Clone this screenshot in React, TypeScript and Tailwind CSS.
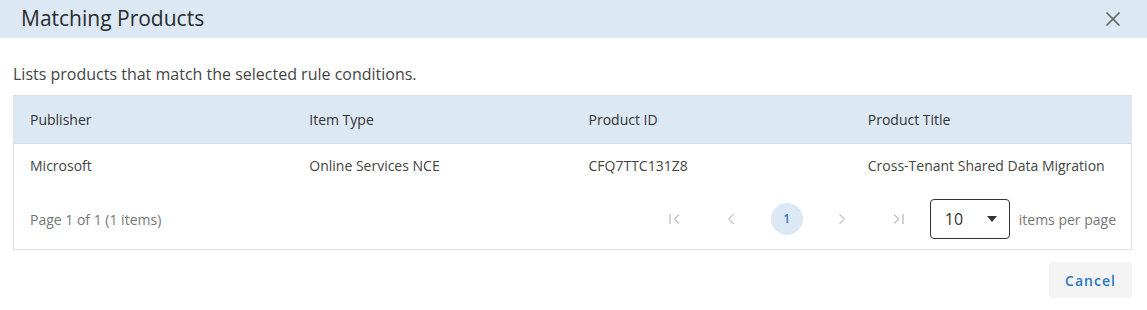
import { ChevronLeft, ChevronRight, X } from "lucide-react";

const columns = ["Publisher", "Item Type", "Product ID", "Product Title"];
const rows = [["Microsoft", "Online Services NCE", "CFQ7TTC131Z8", "Cross-Tenant Shared Data Migration"]];

function FirstIcon() {
  return (
    <svg width="16" height="16" viewBox="0 0 16 16" fill="none" stroke="currentColor" strokeWidth="1.6">
      <path d="M3 3v10" />
      <path d="M12 3.5 7.5 8l4.5 4.5" />
    </svg>
  );
}

function LastIcon() {
  return (
    <svg width="16" height="16" viewBox="0 0 16 16" fill="none" stroke="currentColor" strokeWidth="1.6">
      <path d="M13 3v10" />
      <path d="M4 3.5 8.5 8 4 12.5" />
    </svg>
  );
}

export default function App() {
  return (
    <div className="w-[1147px] h-[310px] bg-white text-[#333] font-['Open_Sans',sans-serif]">
      {/* Title bar */}
      <div className="h-[38px] bg-[#dce8f4] flex items-center justify-between pl-[21px] pr-[22px]">
        <h1 className="text-[21px] leading-[28px] text-[#2b2b2b] -mt-[2px]">Matching Products</h1>
        <X className="w-[24px] h-[24px] text-[#666]" strokeWidth={1.7} />
      </div>

      <div className="px-[13px] pr-[15px]">
        <p className="text-[16px] text-[#444] mt-[25px] mb-[9px] leading-[23px]">
          Lists products that match the selected rule conditions.
        </p>

        <div className="border border-[#e2e2e2]">
          <div className="grid grid-cols-4 h-[48px] bg-[#dce8f4] border-b border-[#d6dde5] items-center text-[14px] text-[#333]">
            {columns.map((c) => (
              <div key={c} className="pl-[16px]">{c}</div>
            ))}
          </div>
          {rows.map((r, i) => (
            <div key={i} className="grid grid-cols-4 h-[45px] items-center text-[14px] text-[#444]">
              {r.map((v, j) => (
                <div key={j} className="pl-[16px] -mt-[2px]">{v}</div>
              ))}
            </div>
          ))}

          {/* Pager */}
          <div className="h-[60px] flex items-center pl-[16px] pr-[15px]">
            <span className="text-[14px] text-[#777]">Page 1 of 1 (1 items)</span>
            <div className="ml-auto flex items-center text-[#c8c8c8]">
              <button className="w-[32px] h-[32px] flex items-center justify-center">
                <FirstIcon />
              </button>
              <button className="w-[32px] h-[32px] flex items-center justify-center ml-[24px]">
                <ChevronLeft className="w-[18px] h-[18px]" strokeWidth={1.6} />
              </button>
              <button className="w-[32px] h-[32px] rounded-full bg-[#dce8f4] text-[#2a78c2] text-[12px] font-semibold flex items-center justify-center ml-[24px]">
                1
              </button>
              <button className="w-[32px] h-[32px] flex items-center justify-center ml-[23px]">
                <ChevronRight className="w-[18px] h-[18px]" strokeWidth={1.6} />
              </button>
              <button className="w-[32px] h-[32px] flex items-center justify-center ml-[24px]">
                <LastIcon />
              </button>
              <div className="ml-[16px] w-[80px] h-[40px] border border-[#333] rounded-[4px] flex items-center justify-between pl-[14px] pr-[12px] text-[#333]">
                <span className="text-[16px]">10</span>
                <svg width="10" height="6" viewBox="0 0 10 6" className="text-[#333]">
                  <path d="M0 0h10L5 6z" fill="currentColor" />
                </svg>
              </div>
              <span className="ml-[9px] text-[14px] text-[#777]">items per page</span>
            </div>
          </div>
        </div>

        <div className="flex justify-end mt-[12px]">
          <button className="w-[83px] h-[36px] rounded-[4px] bg-[#f4f4f4] text-[#2a78c2] text-[14px] font-semibold tracking-[1px]">
            Cancel
          </button>
        </div>
      </div>
    </div>
  );
}
